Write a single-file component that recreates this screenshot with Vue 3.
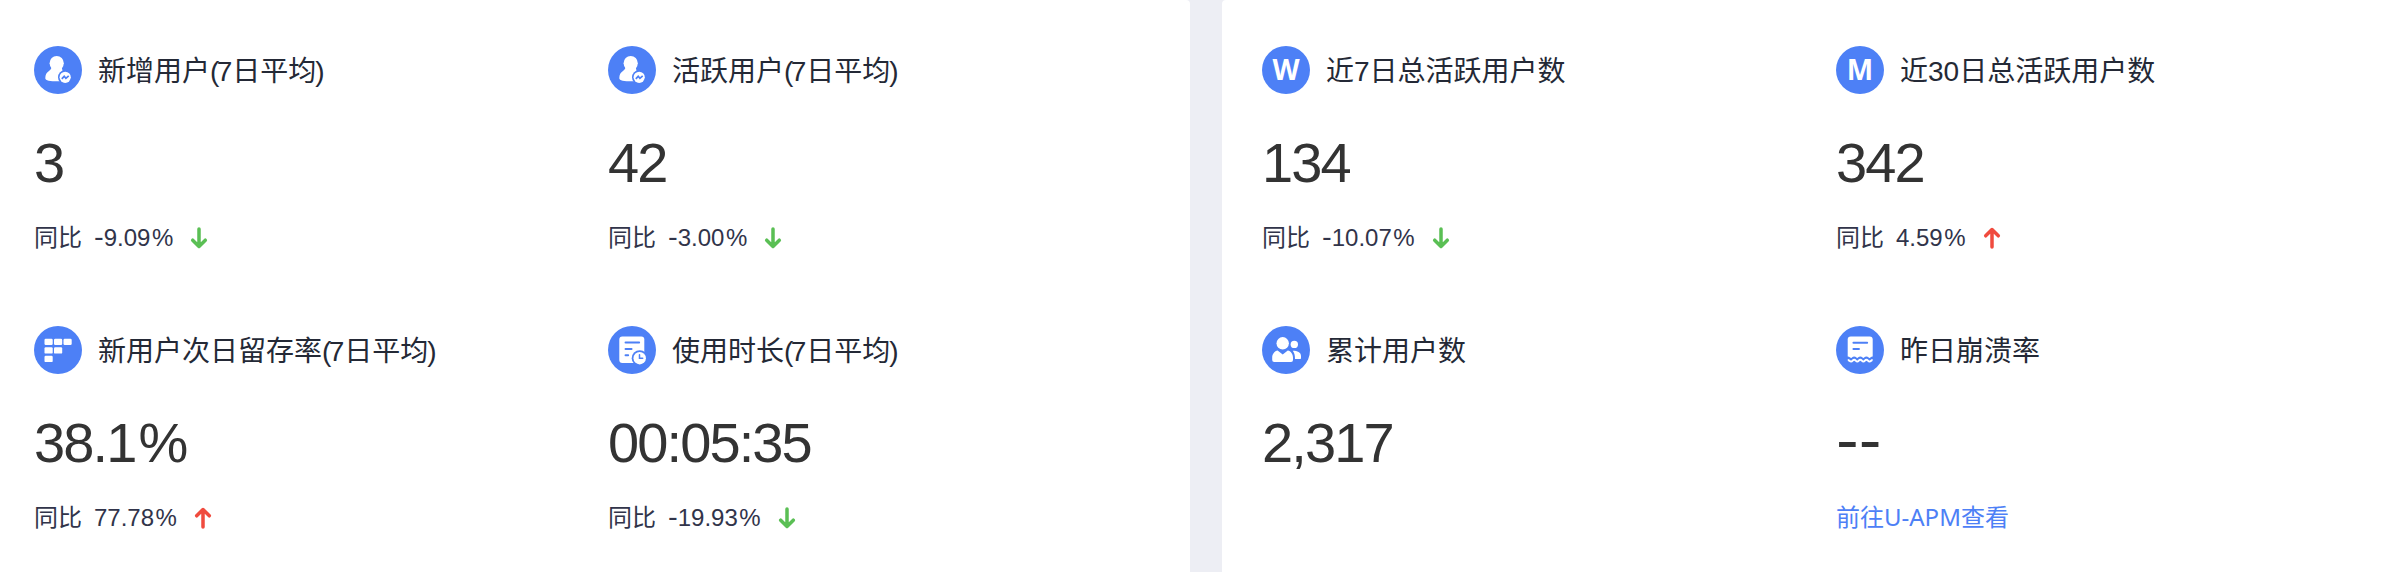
<script setup>
const panels = [
  [
    { icon: 'user', title: '新增用户(7日平均)', value: '3', rate: '-9.09%', trend: 'down' },
    { icon: 'user', title: '活跃用户(7日平均)', value: '42', rate: '-3.00%', trend: 'down' },
    { icon: 'grid', title: '新用户次日留存率(7日平均)', value: '38.1%', rate: '77.78%', trend: 'up' },
    { icon: 'clock', title: '使用时长(7日平均)', value: '00:05:35', rate: '-19.93%', trend: 'down' },
  ],
  [
    { letter: 'W', title: '近7日总活跃用户数', value: '134', rate: '-10.07%', trend: 'down' },
    { letter: 'M', title: '近30日总活跃用户数', value: '342', rate: '4.59%', trend: 'up' },
    { icon: 'users', title: '累计用户数', value: '2,317' },
    { icon: 'crash', title: '昨日崩溃率', value: '--', link: '前往U-APM查看' },
  ],
]

// Punctuation gets its own class so its spacing can be tuned.
const kinds = { '(': 'paren', ')': 'paren close', '-': 'minus', '%': 'percent' }
const runs = (text) =>
  text.split(/([()%-])/).filter(Boolean).map((t) => ({ text: t, kind: kinds[t] }))

const wave = 'M11.8 34c1.500 0 1.800 1.500 3.300 1.500s1.600-1.700 3.100-1.700 1.600 1.700 3.100 1.700 1.500-1.700 3-1.700 1.600 1.700 3.100 1.700 1.500-1.700 3-1.700 1.600 1.700 3.100 1.700 1.700-1.500 3.100-1.500'
</script>

<template>
  <main class="overview">
    <section v-for="(items, p) in panels" :key="p" class="panel">
      <article v-for="item in items" :key="item.title" class="metric">
        <header class="head">
          <span v-if="item.letter" class="badge">{{ item.letter }}</span>
          <svg v-else class="icon" viewBox="0 0 48 48">
            <circle cx="24" cy="24" r="24" fill="#4d80f6" />
            <g v-if="item.icon === 'user'">
              <ellipse cx="22.700" cy="17.300" rx="7.100" ry="7.400" fill="#fff" />
              <path fill="#fff" d="M17.500 21C17.500 25.500 11.300 24.500 11.300 32.200C11.300 34.500 16 35.300 24 35.300H31V27C28.500 25.500 27.900 23.500 27.900 21z" />
              <circle cx="31.200" cy="31.300" r="7.200" fill="#4d80f6" />
              <circle cx="31.200" cy="31.300" r="5.600" fill="#fff" />
              <path d="M27.800 32.800l2.400-2.500 1.700 2 2.800-2.500" fill="none" stroke="#4d80f6" stroke-width="1.700" />
            </g>
            <g v-else-if="item.icon === 'grid'" fill="#fff">
              <rect x="10.500" y="12.700" width="8.200" height="6.300" rx="1.200" />
              <rect x="20" y="12.700" width="8.200" height="6.300" rx="1.200" />
              <rect x="29.500" y="12.700" width="8.200" height="6.300" rx="1.200" />
              <rect x="10.500" y="21.300" width="8.200" height="6.300" rx="1.200" />
              <rect x="20" y="21.300" width="8.200" height="6.300" rx="1.200" />
              <rect x="10.500" y="29.800" width="8.200" height="6.300" rx="1.200" />
            </g>
            <g v-else-if="item.icon === 'clock'" fill="none" stroke-linecap="round">
              <rect x="11.300" y="10.600" width="25" height="26.400" rx="3" fill="#fff" />
              <path d="M17.500 16.500H31.200M17.500 23H23.600M17.500 29.300H20.200" stroke="#4d80f6" stroke-width="1.900" />
              <circle cx="31.700" cy="32.200" r="8" fill="#4d80f6" />
              <circle cx="31.700" cy="32.200" r="6.200" fill="#fff" />
              <path d="M31.500 28.800V32.300H34.700" stroke="#4d80f6" stroke-width="1.500" />
            </g>
            <g v-else-if="item.icon === 'users'" fill="#fff">
              <circle cx="20.700" cy="17.300" r="6.200" />
              <circle cx="32.300" cy="18.400" r="3.700" />
              <path d="M15.600 24.500l5.100 4 5.100-4c3 .600 5.200 3.600 5.200 7V34a2 2 0 0 1-2 2H12.200a2 2 0 0 1-2-2v-2.500c0-3.400 2.400-6.400 5.400-7z" />
              <path d="M30.800 24.700c4.500 0 8.200 1.500 8.200 5.300v2.300a.800.800 0 0 1-.800.800H33c0-3.500-.300-5.600-2.200-8.400z" />
            </g>
            <g v-else fill="none">
              <path d="M11.700 32V13.600a3 3 0 0 1 3-3h19a3 3 0 0 1 3 3V32z" fill="#fff" />
              <path d="M17.400 16.700H31.200M17.400 23H23" stroke="#4d80f6" stroke-width="1.900" stroke-linecap="round" />
              <path :d="wave" transform="translate(0 -2.300)" stroke="#4d80f6" stroke-width="2.200" stroke-linecap="square" />
              <path :d="wave" stroke="#fff" stroke-width="2" />
            </g>
          </svg>
          <h2 class="title"><span v-for="(r, i) in runs(item.title)" :key="i" :class="r.kind">{{ r.text }}</span></h2>
        </header>
        <p class="value">
          <span v-if="item.value === '--'" class="empty">--</span>
          <template v-else><span v-for="(r, i) in runs(item.value)" :key="i" :class="r.kind">{{ r.text }}</span></template>
        </p>
        <p v-if="item.rate" class="compare">
          <span>同比</span>
          <span class="rate"><span v-for="(r, i) in runs(item.rate)" :key="i" :class="r.kind">{{ r.text }}</span></span>
          <svg class="arrow" :class="item.trend" viewBox="0 0 18 22">
            <path d="M9 2V19.500M2.700 13.200L9 19.500L15.300 13.200" />
          </svg>
        </p>
        <a v-else-if="item.link" class="compare link">{{ item.link }}</a>
      </article>
    </section>
  </main>
</template>

<style>
body {
  background: #edeef4;
}
</style>

<style scoped>
.overview {
  display: grid;
  grid-template-columns: 1190px 1170px;
  gap: 32px;
  height: 572px;
  overflow: hidden;
  font-family: "Liberation Sans", "Noto Sans CJK SC", sans-serif;
}
.panel {
  display: grid;
  grid-template-columns: 574px 574px;
  grid-template-rows: 280px 280px;
  box-sizing: border-box;
  height: 600px;
  padding: 46px 0 0 40px;
  background: #fff;
  border-radius: 4px 4px 0 0;
}
.panel:first-child {
  padding-left: 34px;
  border-top-left-radius: 0;
}
.panel:last-child {
  border-top-right-radius: 0;
}
.head {
  display: flex;
  align-items: center;
  gap: 16px;
  height: 48px;
}
.icon,
.badge {
  flex: none;
  width: 48px;
  height: 48px;
}
.badge {
  border-radius: 50%;
  background: #4d80f6;
  color: #fff;
  font: bold 28px/46px "Noto Sans", sans-serif;
  text-align: center;
}
.title {
  margin: 4px 0 0;
  color: #242936;
  font-size: 28px;
  font-weight: 400;
  line-height: 48px;
  white-space: nowrap;
}
.title .paren {
  letter-spacing: -2.600px;
}
.title .close {
  margin-left: -1px;
}
.value {
  height: 64px;
  margin: 37px 0 0;
  color: #333;
  font-size: 56px;
  line-height: 64px;
  letter-spacing: -1.900px;
}
.value .percent {
  margin-left: 3px;
}
.empty {
  font-family: "DejaVu Sans", sans-serif;
  font-size: 63px;
  line-height: 0;
  letter-spacing: 0;
}
.compare {
  display: flex;
  align-items: center;
  height: 36px;
  margin: 25px 0 0;
  color: #31344a;
  font-size: 24px;
  line-height: 36px;
  white-space: nowrap;
}
.rate {
  margin-left: 12px;
}
.rate .minus {
  font-family: "DejaVu Sans", sans-serif;
  font-size: 27px;
  line-height: 0;
}
.rate .percent {
  margin-left: 1.500px;
}
.arrow {
  width: 18px;
  height: 22px;
  margin: -1px 0 0 17px;
  fill: none;
  stroke: #5abf54;
  stroke-width: 3.500;
  stroke-linecap: round;
  stroke-linejoin: round;
}
.arrow.up {
  stroke: #f04b3e;
  transform: rotate(180deg);
}
.link {
  margin-top: 24px;
  color: #4d80f6;
  font-family: "Noto Sans", "Noto Sans CJK SC", sans-serif;
}
</style>
